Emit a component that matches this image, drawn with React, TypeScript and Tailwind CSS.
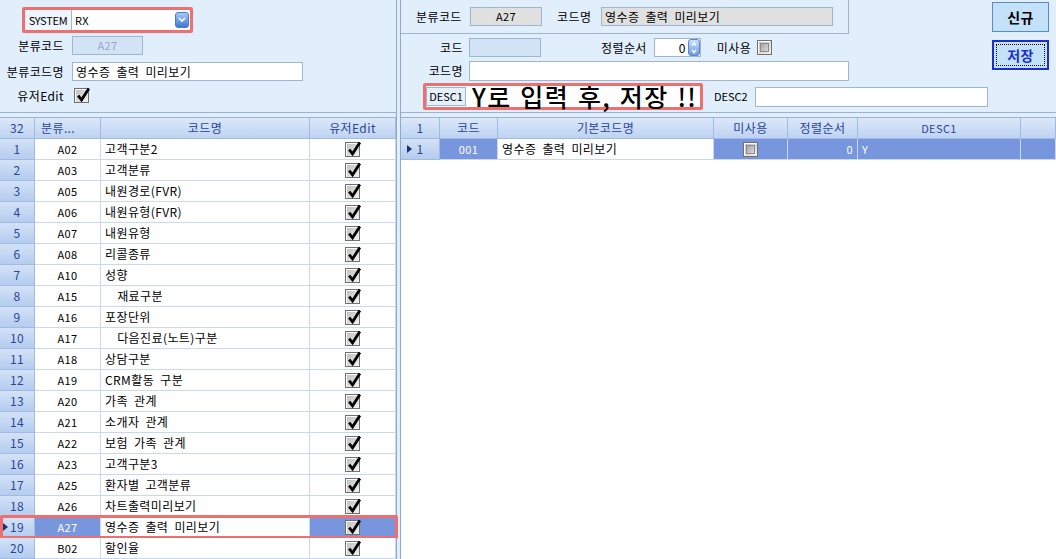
import React from 'react';

const rows: [string, string][] = [
  ['A02', '고객구분2'],
  ['A03', '고객분류'],
  ['A05', '내원경로(FVR)'],
  ['A06', '내원유형(FVR)'],
  ['A07', '내원유형'],
  ['A08', '리콜종류'],
  ['A10', '성향'],
  ['A15', '\u00a0\u00a0재료구분'],
  ['A16', '포장단위'],
  ['A17', '\u00a0\u00a0다음진료(노트)구분'],
  ['A18', '상담구분'],
  ['A19', 'CRM활동 구분'],
  ['A20', '가족 관계'],
  ['A21', '소개자 관계'],
  ['A22', '보험 가족 관계'],
  ['A23', '고객구분3'],
  ['A25', '환자별 고객분류'],
  ['A26', '차트출력미리보기'],
  ['A27', '영수증 출력 미리보기'],
  ['B02', '할인율'],
];

function Check({ checked = true }: { checked?: boolean }) {
  return (
    <span className="relative inline-flex h-[15px] w-[15px] items-center justify-center border border-[#707070] bg-gradient-to-br from-[#bcbcbc] to-[#f4f4f4] shadow-[inset_1px_1px_0_#fff]">
      {checked ? (
        <svg viewBox="0 0 14 14" className="absolute left-[1px] top-[-2px] h-[15px] w-[15px]">
          <path d="M2 8 L5.2 12 L12 1.5" stroke="#000" strokeWidth="2.6" fill="none" strokeLinejoin="miter" />
        </svg>
      ) : (
        <span className="h-[9px] w-[9px] border border-[#8a8a8a] bg-gradient-to-br from-[#a8a8a8] to-[#d8d8d8]" />
      )}
    </span>
  );
}

function RowMark() {
  return (
    <svg viewBox="0 0 5 8" className="h-[8px] w-[5px]">
      <path d="M0 0 L5 4 L0 8 Z" fill="#1c2f7a" />
    </svg>
  );
}

const hdr = 'flex items-center justify-center border-r border-b border-[#9fbbe4] bg-gradient-to-b from-[#dce8f9] to-[#bed3f2] text-[#2a4796]';
const rowHdr = 'flex items-center justify-center border-r border-b border-[#9fbbe4] bg-gradient-to-b from-[#d4e2f7] to-[#b4ccef] text-[#2a4796]';
const cell = 'flex items-center whitespace-nowrap border-r border-b border-[#c9d9ef]';
const SEL = 'bg-[#7896de]';

export default function App() {
  return (
    <div className="flex h-[559px] w-[1056px] overflow-hidden bg-[#e1eefb] font-['Noto_Sans_CJK_KR','Noto_Sans',sans-serif] text-[12px] leading-none tracking-[0.4px] text-black [word-spacing:3px]">
      {/* left panel */}
      <div className="flex w-[397px] flex-col border-r border-[#8fa9cf]">
        <div className="flex h-[113px] flex-col border-b border-[#9bb3d6]">
          <div className="ml-[22px] mt-[7px] flex h-[26px] w-[171px] items-center rounded-[2px] border-[3px] border-[#ef6f6f] bg-[#eef5fd]">
            <span className="w-[46px] text-center text-[11px] tracking-tight">SYSTEM</span>
            <div className="flex h-[20px] flex-1 items-center justify-between border-l border-[#9fb6d3] bg-white pl-[3px] pr-[1px]">
              <span className="text-[11px]">RX</span>
              <span className="flex h-[16px] w-[14px] items-center justify-center rounded-[3px] border border-[#4c78c8] bg-gradient-to-b from-[#a9c9f6] to-[#3f76d4]">
                <svg viewBox="0 0 8 6" className="h-[6px] w-[8px]"><path d="M1 1 L4 4 L7 1" stroke="#fff" strokeWidth="1.6" fill="none" /></svg>
              </span>
            </div>
          </div>
          <div className="mt-[3px] flex items-center">
            <span className="w-[65px] pr-[1px] text-right">분류코드</span>
            <span className="ml-[7px] flex h-[19px] w-[71px] items-center justify-center border border-[#9fb6d3] bg-[#d3e3f6] text-[11px] text-[#95a9c8]">A27</span>
          </div>
          <div className="mt-[7px] flex items-center">
            <span className="w-[65px] pr-[1px] text-right">분류코드명</span>
            <span className="ml-[7px] flex h-[19px] w-[231px] items-center border border-[#9fb6d3] bg-white pl-[3px]">영수증 출력 미리보기</span>
          </div>
          <div className="mt-[7px] flex items-center">
            <span className="w-[65px] pr-[1px] text-right">유저Edit</span>
            <span className="ml-[9px]"><Check /></span>
          </div>
        </div>
        <div className="mt-[4px] flex flex-1 flex-col border-t border-[#9bb3d6] bg-white">
          <div className="grid h-[21px] grid-cols-[35px_66px_209px_86px]">
            <div className={hdr}>32</div>
            <div className={hdr + ' justify-start pl-[6px]'}>분류...</div>
            <div className={hdr}>코드명</div>
            <div className={hdr}>유저Edit</div>
          </div>
          {rows.map(([code, name], i) => {
            const sel = i === 18;
            return (
              <div key={code} className="relative grid h-[21px] grid-cols-[35px_66px_209px_86px]">
                <div className={rowHdr + ' relative'}>
                  {sel && <span className="absolute left-[3px] top-[6px]"><RowMark /></span>}
                  {i + 1}
                </div>
                <div className={cell + ' justify-center text-[11px] ' + (sel ? SEL + ' text-white' : 'bg-white')}>{code}</div>
                <div className={cell + ' bg-white pl-[4px]'}>{name}</div>
                <div className={cell + ' justify-center ' + (sel ? SEL : 'bg-white')}><Check /></div>
                {sel && <div className="pointer-events-none absolute left-0 right-[-2px] top-[-2px] bottom-[-1px] rounded-[2px] border-[3px] border-[#ef6f6f]" />}
              </div>
            );
          })}
        </div>
      </div>

      {/* right panel */}
      <div className="ml-[3px] flex flex-1 flex-col border-l border-[#8fa9cf]">
        <div className="flex h-[113px] border-b border-[#9bb3d6]">
          <div className="flex flex-1 flex-col">
            <div className="flex h-[34px] w-[448px] items-center border-b border-r border-[#9fb6d3]">
              <span className="ml-[15px] w-[48px]">분류코드</span>
              <span className="ml-[6px] flex h-[19px] w-[72px] items-center justify-center border border-[#9fb6d3] bg-[#e0e0e0] text-[11px]">A27</span>
              <span className="ml-[15px] w-[40px]">코드명</span>
              <span className="ml-[4px] flex h-[19px] w-[232px] items-center border border-[#9fb6d3] bg-[#e0e0e0] pl-[3px]">영수증 출력 미리보기</span>
            </div>
            <div className="mt-[4px] flex items-center">
              <span className="w-[62px] text-right">코드</span>
              <span className="ml-[6px] h-[19px] w-[72px] border border-[#9fb6d3] bg-[#d3e3f6]" />
              <span className="ml-[60px]">정렬순서</span>
              <span className="ml-[7px] flex h-[19px] w-[47px] items-center justify-end border border-[#9fb6d3] bg-white">
                <span className="mr-[2px]">0</span>
                <span className="flex h-[17px] w-[12px] flex-col overflow-hidden rounded-[3px] border border-[#5b86cc] bg-gradient-to-b from-[#cfe1fa] to-[#6d9be0]">
                  <svg viewBox="0 0 8 8" className="h-[8px] w-[10px]"><path d="M2 6 L4 3 L6 6" stroke="#fff" strokeWidth="1.5" fill="none" /></svg>
                  <svg viewBox="0 0 8 8" className="h-[8px] w-[10px]"><path d="M2 2 L4 5 L6 2" stroke="#fff" strokeWidth="1.5" fill="none" /></svg>
                </span>
              </span>
              <span className="ml-[16px]">미사용</span>
              <span className="ml-[6px]"><Check checked={false} /></span>
            </div>
            <div className="mt-[4px] flex items-center">
              <span className="w-[62px] text-right">코드명</span>
              <span className="ml-[6px] h-[20px] w-[380px] border border-[#9fb6d3] bg-white" />
            </div>
            <div className="mt-[2px] flex items-center">
              <div className="ml-[22px] flex h-[27px] w-[280px] items-center rounded-[2px] border-[3px] border-[#ef6f6f] bg-white">
                <span className="flex h-[19px] w-[40px] shrink-0 items-center justify-center border border-[#9fb6d3] bg-[#e6f0fb] text-[11px] tracking-normal">DESC1</span>
                <span className="ml-[6px] whitespace-nowrap text-[25px] font-medium leading-[21px] tracking-[1.3px] [word-spacing:2px]">Y로 입력 후, 저장 !!</span>
              </div>
              <span className="ml-[11px] text-[11px] tracking-normal">DESC2</span>
              <span className="ml-[7px] h-[20px] w-[233px] border border-[#9fb6d3] bg-white" />
            </div>
          </div>
          <div className="mr-[7px] mt-[2px] flex w-[57px] flex-col gap-[8px]">
            <button className="flex h-[30px] w-[57px] items-center justify-center border border-[#5a8cc0] bg-[#c3e2fa] text-[14px] font-bold">신규</button>
            <button className="flex h-[30px] w-[57px] items-center justify-center border-2 border-[#1a2fd0] bg-[#c3e2fa] p-[2px]">
              <span className="flex h-full w-full items-center justify-center border border-dotted border-black text-[14px] font-bold text-[#1a2fd0]">저장</span>
            </button>
          </div>
        </div>
        <div className="mt-[4px] flex flex-1 flex-col border-t border-[#9bb3d6] bg-white">
          <div className="grid h-[21px] grid-cols-[39px_58px_216px_74px_70px_163px_1fr]">
            <div className={hdr}>1</div>
            <div className={hdr}>코드</div>
            <div className={hdr}>기본코드명</div>
            <div className={hdr}>미사용</div>
            <div className={hdr}>정렬순서</div>
            <div className={hdr + ' text-[11px]'}>DESC1</div>
            <div className={hdr} />
          </div>
          <div className="grid h-[21px] grid-cols-[39px_58px_216px_74px_70px_163px_1fr]">
            <div className={rowHdr + ' relative'}>
              <span className="absolute left-[6px] top-[6px]"><RowMark /></span>1
            </div>
            <div className={cell + ' justify-center text-[11px] text-white ' + SEL}>001</div>
            <div className={cell + ' bg-white pl-[4px]'}>영수증 출력 미리보기</div>
            <div className={cell + ' justify-center ' + SEL}><Check checked={false} /></div>
            <div className={cell + ' justify-end pr-[4px] text-[11px] text-white ' + SEL}>0</div>
            <div className={cell + ' pl-[4px] text-[11px] text-white ' + SEL}>Y</div>
            <div className={cell + ' ' + SEL} />
          </div>
        </div>
      </div>
    </div>
  );
}
